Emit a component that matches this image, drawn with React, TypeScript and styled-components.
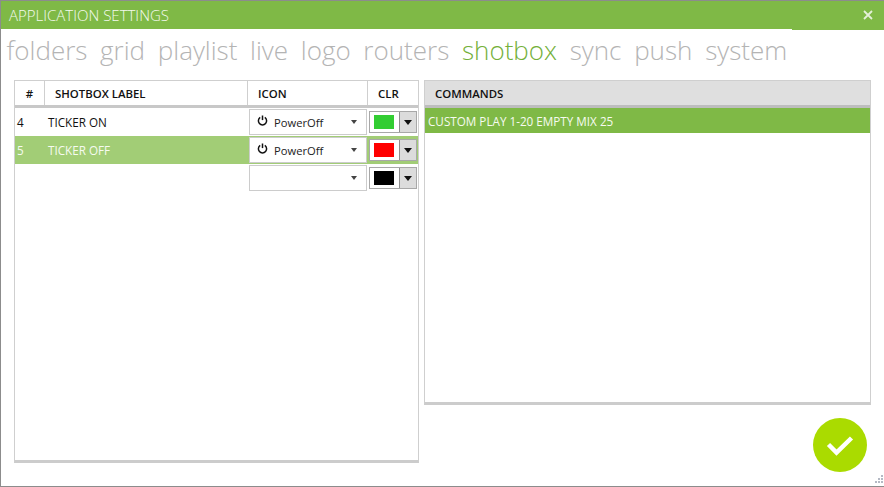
import React from 'react';
import styled, {createGlobalStyle} from 'styled-components';

const GlobalStyle = createGlobalStyle`
  html, body {
    margin: 0;
    padding: 0;
    background: #fff;
  }
`

const Window = styled.div`
  box-sizing: border-box;
  width: 884px;
  height: 487px;
  border: 1px solid #8c8c8c;
  border-right-width: 0;
  background: #fff;
  font-family: "Open Sans", "Noto Sans", sans-serif;
  font-size: 11.7px;
  color: #111;
  display: flex;
  flex-direction: column;
  overflow: hidden;
  position: relative;
`

const TitleBar = styled.div`
  height: 28px;
  flex: none;
  background: #7fb946;
  color: #f4f9ee;
  display: flex;
  align-items: center;
  justify-content: space-between;
  padding: 0 11px 0 8px;
  font-size: 15px;
  font-weight: 300;
  position: relative;
  &::after {
    content: "";
    position: absolute;
    left: 791px;
    right: 0;
    top: 28px;
    height: 1px;
    background: #7fb946;
  }
`

const Tabs = styled.div`
  height: 51px;
  flex: none;
  display: flex;
  gap: 12.7px;
  padding: 0 0 0 5.5px;
  font-size: 26px;
  font-weight: 300;
  line-height: 42px;
`

const Tab = styled.span<{$active?: boolean}>`
  color: ${p => (p.$active ? '#74b03a' : '#b4b4b4')};
`

const Content = styled.div`
  flex: 1;
  display: flex;
  align-items: flex-start;
  gap: 5px;
  padding-left: 13px;
`

const Panel = styled.div<{$width: number; $height: number}>`
  box-sizing: border-box;
  width: ${p => p.$width}px;
  height: ${p => p.$height}px;
  border: 1px solid #cfcfcf;
  border-bottom: 3px solid #cccccc;
`

const HeadRow = styled.div<{$shaded?: boolean}>`
  box-sizing: border-box;
  height: 27px;
  display: flex;
  background: ${p => (p.$shaded ? '#dfdfdf' : '#fff')};
  border-bottom: 3px solid ${p => (p.$shaded ? '#bdbdbd' : '#c8c8c8')};
  font-weight: 600;
  font-size: 11.4px;
`

const HeadCell = styled.div<{$width: number; $center?: boolean}>`
  box-sizing: border-box;
  width: ${p => p.$width}px;
  flex: none;
  display: flex;
  align-items: center;
  justify-content: ${p => (p.$center ? 'center' : 'flex-start')};
  padding-left: ${p => (p.$center ? 0 : 10)}px;
  border-right: 1px solid #cfcfcf;
  &:last-child {
    border-right: 0;
  }
`

const Row = styled.div<{$selected?: boolean}>`
  height: 28px;
  display: flex;
  align-items: center;
  background: ${p => (p.$selected ? '#a2cd76' : 'transparent')};
  color: ${p => (p.$selected ? '#f6fbf0' : '#111')};
`

const NumCell = styled.div`
  width: 33px;
  flex: none;
  box-sizing: border-box;
  padding-left: 2px;
`

const LabelCell = styled.div`
  width: 201px;
  flex: none;
`

const IconSelect = styled.div`
  box-sizing: border-box;
  width: 118px;
  height: 26px;
  flex: none;
  display: flex;
  align-items: center;
  background: #fff;
  border: 1px solid #cccccc;
  padding: 0 9px 0 7px;
  color: #222;
`

const IconName = styled.span`
  flex: 1;
  margin-left: 6px;
  font-size: 11.2px;
`

const Arrow = styled.span<{$dark?: boolean}>`
  width: 0;
  height: 0;
  margin-left: auto;
  border-left: ${p => (p.$dark ? 4 : 3)}px solid transparent;
  border-right: ${p => (p.$dark ? 4 : 3)}px solid transparent;
  border-top: ${p => (p.$dark ? 5 : 4)}px solid ${p => (p.$dark ? '#111' : '#444')};
`

const ColorPicker = styled.div`
  box-sizing: border-box;
  width: 48px;
  height: 22px;
  margin-left: 2px;
  flex: none;
  display: flex;
  background: #fff;
  border: 1px solid #a8a8a8;
`

const Swatch = styled.div`
  flex: 1;
  display: flex;
  align-items: center;
  justify-content: center;
  padding-right: 2px;
`

const SwatchFill = styled.div<{$color: string}>`
  width: 20px;
  height: 14px;
  background: ${p => p.$color};
`

const PickerButton = styled.div`
  width: 16px;
  flex: none;
  display: flex;
  align-items: center;
  justify-content: center;
  background: #dcdcdc;
  border-left: 1px solid #8f8f8f;
`

const CommandRow = styled.div`
  height: 25px;
  display: flex;
  align-items: center;
  padding: 1px 0 0 3px;
  box-sizing: border-box;
  background: #7fb946;
  color: #f6fbf0;
`

const OkButton = styled.button`
  position: absolute;
  left: 812px;
  top: 417px;
  width: 54px;
  height: 54px;
  padding: 0;
  border: 0;
  border-radius: 50%;
  background: #aadb00;
  display: flex;
  align-items: center;
  justify-content: center;
`

const Grip = styled.svg`
  position: absolute;
  right: 1px;
  bottom: 1px;
`

const Power = () => (
  <svg width="11" height="11" viewBox="0 0 11 11" fill="none" stroke="#111" strokeWidth="1.5" style={{marginTop: -4}}>
    <path d="M3.2 2.4a4.1 4.1 0 1 0 4.6 0"/>
    <path d="M5.5 0.5v4.6"/>
  </svg>
)

const tabs = ['folders', 'grid', 'playlist', 'live', 'logo', 'routers', 'shotbox', 'sync', 'push', 'system']

const rows = [
  {num: '4', label: 'TICKER ON', icon: true, color: '#32cd32'},
  {num: '5', label: 'TICKER OFF', icon: true, color: '#ff0000', selected: true},
  {num: '', label: '', icon: false, color: '#000000'},
]

function App() {
  return (
    <Window>
      <GlobalStyle/>
      <TitleBar>
        APPLICATION SETTINGS
        <svg width="10" height="10" viewBox="0 0 10 10" stroke="#e4f0d8" strokeWidth="1.8">
          <path d="M1 1l8 8M9 1l-8 8"/>
        </svg>
      </TitleBar>
      <Tabs>
        {tabs.map(t => <Tab key={t} $active={t === 'shotbox'}>{t}</Tab>)}
      </Tabs>
      <Content>
        <Panel $width={405} $height={383}>
          <HeadRow>
            <HeadCell $width={30} $center>#</HeadCell>
            <HeadCell $width={203}>SHOTBOX LABEL</HeadCell>
            <HeadCell $width={120}>ICON</HeadCell>
            <HeadCell $width={50}>CLR</HeadCell>
          </HeadRow>
          {rows.map(r => (
            <Row key={r.color} $selected={r.selected}>
              <NumCell>{r.num}</NumCell>
              <LabelCell>{r.label}</LabelCell>
              <IconSelect>
                {r.icon && <Power/>}
                {r.icon && <IconName>PowerOff</IconName>}
                <Arrow/>
              </IconSelect>
              <ColorPicker>
                <Swatch><SwatchFill $color={r.color}/></Swatch>
                <PickerButton><Arrow $dark style={{margin: 0}}/></PickerButton>
              </ColorPicker>
            </Row>
          ))}
        </Panel>
        <Panel $width={447} $height={325}>
          <HeadRow $shaded>
            <HeadCell $width={445}>COMMANDS</HeadCell>
          </HeadRow>
          <CommandRow>CUSTOM PLAY 1-20 EMPTY MIX 25</CommandRow>
        </Panel>
      </Content>
      <OkButton>
        <svg width="28" height="22" viewBox="0 0 28 22" fill="none" stroke="#fff" strokeWidth="4.5" strokeLinejoin="miter">
          <path d="M2.5 10.5l8 8L25.5 4"/>
        </svg>
      </OkButton>
      <Grip width="10" height="10" viewBox="0 0 10 10" fill="#b4b9c4">
        <rect x="8" y="0" width="2" height="2"/>
        <rect x="5" y="3" width="2" height="2"/><rect x="8" y="3" width="2" height="2"/>
        <rect x="2" y="6" width="2" height="2"/><rect x="5" y="6" width="2" height="2"/><rect x="8" y="6" width="2" height="2"/>
      </Grip>
    </Window>
  );
}

export default App;
